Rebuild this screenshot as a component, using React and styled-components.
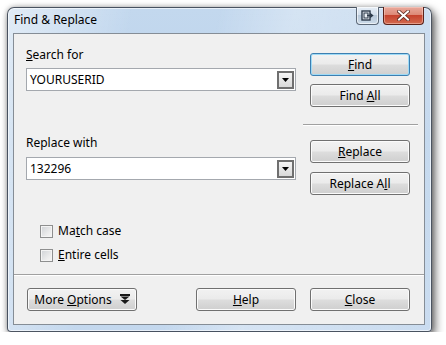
import React from 'react';
import styled, { createGlobalStyle, css } from 'styled-components';

const GlobalStyle = createGlobalStyle`
  body {
    margin: 0;
    background: #ffffff;
    font-family: "Segoe UI", "Noto Sans", "Liberation Sans", sans-serif;
    font-size: 12px;
    color: #000;
  }
`;

// outer glass window
const Window = styled.div`
  box-sizing: border-box;
  width: 425px;
  height: 325px;
  margin: 7px 0 0 7px;
  padding: 0 6px 6px 5px;
  border: 1px solid rgba(40, 48, 60, 0.8);
  border-radius: 7px 7px 4px 4px;
  display: flex;
  flex-direction: column;
  background:
    linear-gradient(100deg, rgba(255,255,255,0.5) 0%, rgba(255,255,255,0) 26%, rgba(255,255,255,0) 44%, rgba(255,255,255,0.3) 60%, rgba(255,255,255,0.1) 100%),
    linear-gradient(180deg, #c3d8ee 0%, #bcd3eb 40%, #c4d8ee 100%);
  box-shadow: 3px 4px 10px rgba(0, 0, 0, 0.6), 0 0 5px rgba(0, 0, 0, 0.25), inset 0 0 0 1px rgba(255, 255, 255, 0.6);
`;

const TitleBar = styled.div`
  height: 25px;
  display: flex;
  justify-content: space-between;
  align-items: flex-start;
`;

const Title = styled.div`
  padding: 4px 0 0 1px;
  line-height: 15px;
  color: #000;
`;

const Caption = styled.div`
  display: flex;
  gap: 4px;
  margin: -1px 1px 0 0;
`;

const CaptionButton = styled.div`
  box-sizing: border-box;
  height: 18px;
  width: ${p => (p.close ? 41 : 23)}px;
  border: 1px solid ${p => (p.close ? '#5b2219' : '#5d6978')};
  border-top: none;
  border-radius: 0 0 4px 4px;
  display: flex;
  align-items: center;
  justify-content: center;
  ${p => p.close
    ? css`
      background: linear-gradient(180deg, #e9a99b 0%, #dd8a78 45%, #c6432e 50%, #d26a4f 100%);
      box-shadow: inset 0 0 0 1px rgba(255, 220, 210, 0.45);
    `
    : css`
      background: linear-gradient(180deg, #e6eef7 0%, #d3dfec 45%, #b9c9da 50%, #ccdbe9 100%);
      box-shadow: inset 0 0 0 1px rgba(255, 255, 255, 0.6);
    `}
`;

// dialog body
const Client = styled.div`
  flex: 1;
  box-sizing: border-box;
  border: 1px solid #858d96;
  background: #f0f0f0;
  display: flex;
  flex-direction: column;
`;

const TopArea = styled.div`
  display: flex;
  align-items: flex-start;
  gap: 14px;
  padding: 0 14px 0 12px;
`;

const LeftCol = styled.div`
  width: 270px;
  padding-top: 13px;
  display: flex;
  flex-direction: column;
`;

const Label = styled.div`
  line-height: 15px;
  margin-top: ${p => p.top || 0}px;
  margin-bottom: ${p => p.gap || 6}px;
`;

const Combo = styled.div`
  box-sizing: border-box;
  height: 23px;
  border: 1px solid #a4a8ae;
  background: #fff;
  display: flex;
  align-items: center;
  justify-content: space-between;
  padding: 0 1px 0 3px;
`;

const ComboText = styled.span`
  line-height: 15px;
`;

const DropButton = styled.div`
  box-sizing: border-box;
  width: 17px;
  height: 18px;
  border: 2px solid #6f6f6f;
  background: linear-gradient(180deg, #f4f4f4 0%, #e6e6e6 50%, #d9d9d9 100%);
  display: flex;
  align-items: center;
  justify-content: center;
`;

const RightCol = styled.div`
  width: 100px;
  padding-top: 19px;
  display: flex;
  flex-direction: column;
`;

const Button = styled.div`
  box-sizing: border-box;
  width: ${p => p.w || 100}px;
  height: 23px;
  margin-top: ${p => p.top || 0}px;
  border: 1px solid ${p => (p.primary ? '#3c7fb1' : '#707070')};
  border-radius: 3px;
  background: linear-gradient(180deg, #f2f2f2 0%, #ebebeb 48%, #dddddd 52%, #cfcfcf 100%);
  box-shadow: inset 0 0 0 1px ${p => (p.primary ? '#9edaf6' : '#fbfbfb')};
  display: flex;
  align-items: center;
  justify-content: center;
  gap: 8px;
  line-height: 15px;
  padding-bottom: 1px;
`;

const Separator = styled.div`
  height: 1px;
  background: #a0a0a0;
  box-shadow: 0 1px 0 #ffffff;
`;

const SideSeparator = styled(Separator)`
  margin: 17px -8px 15px -7px;
`;

const Checks = styled.div`
  display: flex;
  flex-direction: column;
  gap: 11px;
  padding: 30px 0 0 26px;
`;

const CheckRow = styled.div`
  display: flex;
  align-items: center;
  gap: 5px;
  height: 13px;
`;

const Box = styled.div`
  box-sizing: border-box;
  width: 13px;
  height: 13px;
  border: 1px solid #8e8f8f;
  background: linear-gradient(135deg, #cfd2d6 0%, #eeeeee 70%, #f6f6f6 100%);
  box-shadow: inset 0 0 0 1px #f4f4f4;
`;

const CheckLabel = styled.span`
  line-height: 13px;
  margin-top: -2px;
`;

const Footer = styled.div`
  margin-top: auto;
  display: flex;
  flex-direction: column;
`;

const ButtonRow = styled.div`
  display: flex;
  gap: 14px;
  padding: 13px 14px 13px 13px;
`;

const Push = styled.div`
  flex: 1;
`;

const Key = styled.u`
  text-decoration-thickness: 1px;
  text-underline-offset: 1px;
`;

function Arrow() {
  return (
    <svg width="7" height="4" viewBox="0 0 7 4">
      <path d="M0 0H7L3.5 4Z" fill="#000" />
    </svg>
  );
}

function DoubleArrow() {
  return (
    <svg width="10" height="10" viewBox="0 0 10 10">
      <rect x="0" y="0" width="10" height="2" fill="#1a1a1a" />
      <path d="M0.5 2.5H9.5L5 6Z" fill="#1a1a1a" />
      <path d="M0.5 6H9.5L5 10Z" fill="#1a1a1a" />
    </svg>
  );
}

function RollIcon() {
  return (
    <svg width="13" height="11" viewBox="0 0 13 11">
      <rect x="1" y="1" width="8" height="9" fill="#e9eef4" stroke="#2d3a4a" strokeWidth="1.4" />
      <rect x="3" y="3" width="4" height="5" fill="none" stroke="#2d3a4a" strokeWidth="1" />
      <path d="M6 5.5H10.5M9 3.5L11.5 5.5L9 7.5" fill="none" stroke="#2d3a4a" strokeWidth="1.4" />
    </svg>
  );
}

function CloseIcon() {
  return (
    <svg width="13" height="11" viewBox="0 0 13 11">
      <path d="M2 1.5L11 9.5M11 1.5L2 9.5" stroke="#5a2a22" strokeWidth="3.6" strokeLinecap="square" />
      <path d="M2 1.5L11 9.5M11 1.5L2 9.5" stroke="#ffffff" strokeWidth="2" strokeLinecap="square" />
    </svg>
  );
}

export default function App() {
  return (
    <>
      <GlobalStyle />
      <Window>
        <TitleBar>
          <Title>Find &amp; Replace</Title>
          <Caption>
            <CaptionButton><RollIcon /></CaptionButton>
            <CaptionButton close><CloseIcon /></CaptionButton>
          </Caption>
        </TitleBar>

        <Client>
          <TopArea>
            <LeftCol>
              <Label><Key>S</Key>earch for</Label>
              <Combo>
                <ComboText>YOURUSERID</ComboText>
                <DropButton><Arrow /></DropButton>
              </Combo>
              <Label top={44} gap={7}>Replace with</Label>
              <Combo>
                <ComboText>132296</ComboText>
                <DropButton><Arrow /></DropButton>
              </Combo>
            </LeftCol>

            <RightCol>
              <Button primary><span><Key>F</Key>ind</span></Button>
              <Button top={8}><span>Find <Key>A</Key>ll</span></Button>
              <SideSeparator />
              <Button><span><Key>R</Key>eplace</span></Button>
              <Button top={9}><span>Replace A<Key>l</Key>l</span></Button>
            </RightCol>
          </TopArea>

          <Checks>
            <CheckRow>
              <Box />
              <CheckLabel>Ma<Key>t</Key>ch case</CheckLabel>
            </CheckRow>
            <CheckRow>
              <Box />
              <CheckLabel><Key>E</Key>ntire cells</CheckLabel>
            </CheckRow>
          </Checks>

          <Footer>
            <Separator />
            <ButtonRow>
              <Button w={110}>
                <span>More <Key>O</Key>ptions</span>
                <DoubleArrow />
              </Button>
              <Push />
              <Button><span><Key>H</Key>elp</span></Button>
              <Button><span><Key>C</Key>lose</span></Button>
            </ButtonRow>
          </Footer>
        </Client>
      </Window>
    </>
  );
}
